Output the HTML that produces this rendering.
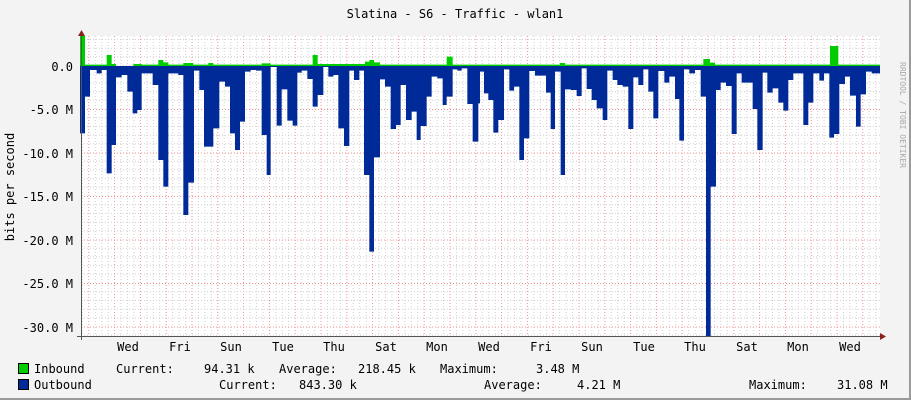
<!DOCTYPE html>
<html><head><meta charset="utf-8"><style>
html,body{margin:0;padding:0;background:#f3f3f3;}
svg{display:block;}
text{font-family:"DejaVu Sans Mono","Liberation Mono",monospace;font-size:12px;fill:#000;}
</style></head><body>
<svg width="911" height="400" viewBox="0 0 911 400" xmlns="http://www.w3.org/2000/svg">
<defs>
<pattern id="vg" patternUnits="userSpaceOnUse" x="88.3" y="0" width="25.8" height="400">
<line x1="6.95" y1="0" x2="6.95" y2="400" stroke="#cfcfcf" stroke-dasharray="1,2"/>
<line x1="13.4" y1="0" x2="13.4" y2="400" stroke="#cfcfcf" stroke-dasharray="1,2"/>
<line x1="19.85" y1="0" x2="19.85" y2="400" stroke="#cfcfcf" stroke-dasharray="1,2"/>
<line x1="0.5" y1="0" x2="0.5" y2="400" stroke="#f09090" stroke-dasharray="1,2"/>
</pattern>
<pattern id="hg" patternUnits="userSpaceOnUse" x="0" y="65.5" width="911" height="43.5">
<line x1="0" y1="8.7" x2="911" y2="8.7" stroke="#cfcfcf" stroke-dasharray="1,2"/>
<line x1="0" y1="17.4" x2="911" y2="17.4" stroke="#cfcfcf" stroke-dasharray="1,2"/>
<line x1="0" y1="26.1" x2="911" y2="26.1" stroke="#cfcfcf" stroke-dasharray="1,2"/>
<line x1="0" y1="34.8" x2="911" y2="34.8" stroke="#cfcfcf" stroke-dasharray="1,2"/>
<line x1="0" y1="0.5" x2="911" y2="0.5" stroke="#f09090" stroke-dasharray="1,2"/>
</pattern>
</defs>
<rect x="0" y="0" width="911" height="400" fill="#f3f3f3"/>
<rect x="909" y="0" width="2" height="400" fill="#9a9a9a"/>
<rect x="0" y="398" width="911" height="2" fill="#9a9a9a"/>
<rect x="81" y="36" width="799" height="300" fill="#fff"/>
<g>
<rect x="81" y="36" width="799" height="300" fill="url(#vg)"/>
<rect x="81" y="36" width="799" height="300" fill="url(#hg)"/>
</g>
<g transform="translate(80,30) scale(0.33333)">
<polygon fill="#00cc00" points="0,108 0,18 15,18 15,104 80,104 80,75 95,75 95,102 108,102 108,108 160,108 160,102 185,102 185,104 235,104 235,90 250,90 250,97 265,97 265,104 310,104 310,99 340,99 340,104 385,104 385,99 400,99 400,104 545,104 545,100 572,100 572,104 698,104 698,75 713,75 713,102 855,102 855,95 868,95 868,90 882,90 882,97 900,97 900,104 1100,104 1100,80 1118,80 1118,104 1440,104 1440,99 1455,99 1455,104 1870,104 1870,87 1890,87 1890,98 1905,98 1905,104 2250,104 2250,48 2275,48 2275,104 2400,104 2400,108"/>
<polygon fill="#002a97" points="0,108 0,310 15,310 15,200 30,200 30,120 50,120 50,130 65,130 65,120 80,120 80,430 95,430 95,345 108,345 108,142 125,142 125,135 142,135 142,185 158,185 158,250 172,250 172,240 185,240 185,130 218,130 218,165 235,165 235,390 250,390 250,470 265,470 265,130 295,130 295,135 310,135 310,555 325,555 325,458 342,458 342,122 358,122 358,180 372,180 372,350 400,350 400,295 418,295 418,155 435,155 435,170 450,170 450,310 465,310 465,360 480,360 480,275 495,275 495,125 512,125 512,120 528,120 528,122 545,122 545,315 560,315 560,435 572,435 572,108 590,108 590,287 605,287 605,178 622,178 622,272 638,272 638,287 652,287 652,128 665,128 665,122 682,122 682,147 698,147 698,230 713,230 713,195 730,195 730,108 745,108 745,140 760,140 760,135 775,135 775,295 792,295 792,348 808,348 808,122 822,122 822,150 838,150 838,122 852,122 852,435 868,435 868,665 882,665 882,382 900,382 900,148 915,148 915,170 932,170 932,297 948,297 948,285 962,285 962,165 978,165 978,270 995,270 995,245 1010,245 1010,330 1022,330 1022,288 1040,288 1040,200 1055,200 1055,140 1072,140 1072,145 1088,145 1088,225 1100,225 1100,200 1118,200 1118,118 1132,118 1132,122 1145,122 1145,115 1162,115 1162,222 1178,222 1178,335 1195,335 1195,220 1200,220 1200,125 1212,125 1212,190 1225,190 1225,210 1240,210 1240,308 1255,308 1255,270 1272,270 1272,118 1288,118 1288,182 1302,182 1302,170 1318,170 1318,390 1332,390 1332,325 1348,325 1348,123 1365,123 1365,137 1398,137 1398,188 1412,188 1412,297 1425,297 1425,125 1442,125 1442,435 1455,435 1455,178 1472,178 1472,180 1490,180 1490,198 1505,198 1505,115 1520,115 1520,177 1535,177 1535,210 1550,210 1550,235 1568,235 1568,270 1582,270 1582,122 1598,122 1598,150 1612,150 1612,165 1628,165 1628,170 1645,170 1645,297 1660,297 1660,142 1675,142 1675,165 1690,165 1690,118 1705,118 1705,185 1720,185 1720,265 1735,265 1735,123 1753,123 1753,158 1768,158 1768,140 1785,140 1785,207 1798,207 1798,332 1812,332 1812,118 1828,118 1828,130 1845,130 1845,120 1862,120 1862,200 1878,200 1878,918 1892,918 1892,470 1908,470 1908,180 1922,180 1922,158 1938,158 1938,168 1955,168 1955,312 1970,312 1970,130 1985,130 1985,158 2018,158 2018,237 2032,237 2032,360 2048,360 2048,128 2062,128 2062,188 2078,188 2078,175 2095,175 2095,218 2110,218 2110,242 2125,242 2125,150 2140,150 2140,130 2170,130 2170,285 2185,285 2185,218 2200,218 2200,130 2218,130 2218,152 2232,152 2232,130 2248,130 2248,323 2262,323 2262,312 2278,312 2278,162 2295,162 2295,140 2310,140 2310,197 2328,197 2328,290 2342,290 2342,193 2358,193 2358,125 2375,125 2375,130 2400,130 2400,108"/>
</g>
<line x1="81" y1="66.5" x2="880" y2="66.5" stroke="#002a97" stroke-width="1"/>
<line x1="81.5" y1="33" x2="81.5" y2="340" stroke="#555"/>
<line x1="77" y1="336.5" x2="884" y2="336.5" stroke="#555"/>
<polygon points="78,36 85,36 81.5,30" fill="#8a2020"/>
<polygon points="880,333 880,340 886,336.5" fill="#8a2020"/>
<text x="455" y="18" text-anchor="middle">Slatina - S6 - Traffic - wlan1</text>
<text transform="translate(14,187) rotate(-90)" text-anchor="middle">bits per second</text>
<text transform="translate(900,115) rotate(90)" text-anchor="middle" style="font-size:8px;fill:#aaa">RRDTOOL / TOBI OETIKER</text>
<g text-anchor="end">
<text x="73" y="71">0.0</text>
<text x="73" y="114">-5.0 M</text>
<text x="73" y="158">-10.0 M</text>
<text x="73" y="201">-15.0 M</text>
<text x="73" y="245">-20.0 M</text>
<text x="73" y="288">-25.0 M</text>
<text x="73" y="332">-30.0 M</text>
</g>
<g text-anchor="middle">
<text x="128" y="351">Wed</text><text x="180" y="351">Fri</text><text x="231" y="351">Sun</text><text x="283" y="351">Tue</text><text x="334" y="351">Thu</text><text x="386" y="351">Sat</text><text x="437" y="351">Mon</text><text x="489" y="351">Wed</text><text x="541" y="351">Fri</text><text x="592" y="351">Sun</text><text x="644" y="351">Tue</text><text x="695" y="351">Thu</text><text x="747" y="351">Sat</text><text x="798" y="351">Mon</text><text x="850" y="351">Wed</text>
</g>
<rect x="18.5" y="363.5" width="10" height="10" fill="#00cc00" stroke="#000"/>
<rect x="18.5" y="379.5" width="10" height="10" fill="#002a97" stroke="#000"/>
<text x="34" y="373">Inbound</text>
<text x="116" y="373">Current:</text>
<text x="204" y="373">94.31 k</text>
<text x="279" y="373">Average:</text>
<text x="358" y="373">218.45 k</text>
<text x="440" y="373">Maximum:</text>
<text x="536" y="373">3.48 M</text>
<text x="34" y="389">Outbound</text>
<text x="219" y="389">Current:</text>
<text x="299" y="389">843.30 k</text>
<text x="484" y="389">Average:</text>
<text x="577" y="389">4.21 M</text>
<text x="749" y="389">Maximum:</text>
<text x="837" y="389">31.08 M</text>
</svg>
</body></html>
